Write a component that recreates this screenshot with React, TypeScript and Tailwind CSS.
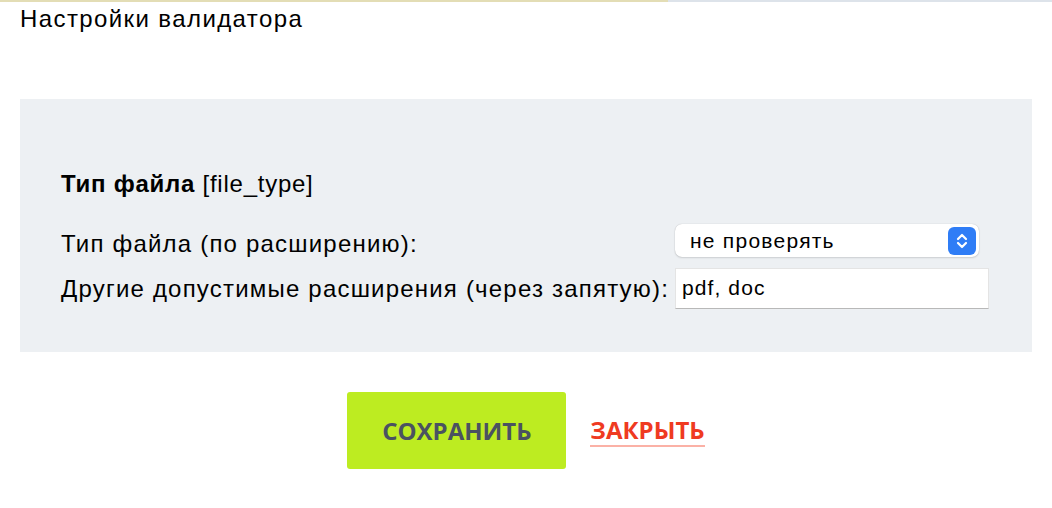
const Stepper = () => (
  <span className="flex h-[28px] w-[28px] items-center justify-center rounded-[6px] bg-[#2f7df6]">
    <svg width="14" height="20" viewBox="0 0 14 20" fill="none" stroke="white" strokeWidth="2.2" strokeLinecap="round" strokeLinejoin="round">
      <path d="M3 8 L7 4 L11 8" />
      <path d="M3 12 L7 16 L11 12" />
    </svg>
  </span>
);

const App = () => {
  return (
    <div className="h-[508px] w-[1052px] overflow-hidden bg-white font-['Liberation_Sans',Arial,sans-serif] text-black">
      <div className="flex h-[2px] w-full">
        <div className="h-full w-[668px] bg-[#e3ddb5]" />
        <div className="h-full flex-1 bg-[#dde3ea]" />
      </div>
      <h2 className="ml-[20px] mt-[3px] text-[24px] leading-[28px] tracking-[1.4px]">Настройки валидатора</h2>

      <div className="mx-[20px] mt-[66px] h-[253px] bg-[#edf0f3] pl-[41px] pt-[71px]">
        <div className="text-[24px] leading-[28px] tracking-[0.75px]">
          <b>Тип файла</b> [file_type]
        </div>
        <table className="mt-[23px] border-collapse text-[24px] leading-[26px] tracking-[1.2px]">
          <tbody>
            <tr>
              <td className="h-[45px] w-[614px] p-0 align-middle">Тип файла (по расширению):</td>
              <td className="p-0 align-middle">
                <div className="-mt-[6px] flex h-[33px] w-[304px] items-center justify-between rounded-[7px] bg-white pl-[15px] pr-[3px] text-[21px] tracking-[1.25px] shadow-[0_0_1px_rgba(0,0,0,0.25),0_1px_2px_rgba(0,0,0,0.12)]">
                  <span className="leading-none">не проверять</span>
                  <Stepper />
                </div>
              </td>
            </tr>
            <tr>
              <td className="h-[45px] p-0 align-middle">Другие допустимые расширения (через запятую):</td>
              <td className="p-0 align-middle">
                <input
                  readOnly
                  value="pdf, doc"
                  className="-mt-[1px] block h-[41px] w-[314px] border border-[#e4e4e4] border-b-[#b8b8b8] bg-white px-[6px] text-[21px] tracking-[1.1px] outline-none"
                />
              </td>
            </tr>
          </tbody>
        </table>
      </div>

      <div className="mt-[40px] flex items-center justify-center gap-[24px]">
        <button className="flex h-[77px] w-[219px] items-center justify-center rounded-[3px] bg-[#bdec21] font-['Open_Sans',sans-serif] text-[24px] font-bold text-[#4a5261]">
          СОХРАНИТЬ
        </button>
        <a className="border-b-2 border-[#fbb1a6] font-['Open_Sans',sans-serif] text-[24px] font-bold leading-[30px] text-[#ef3a21]">
          ЗАКРЫТЬ
        </a>
      </div>
    </div>
  );
};

export default App;
